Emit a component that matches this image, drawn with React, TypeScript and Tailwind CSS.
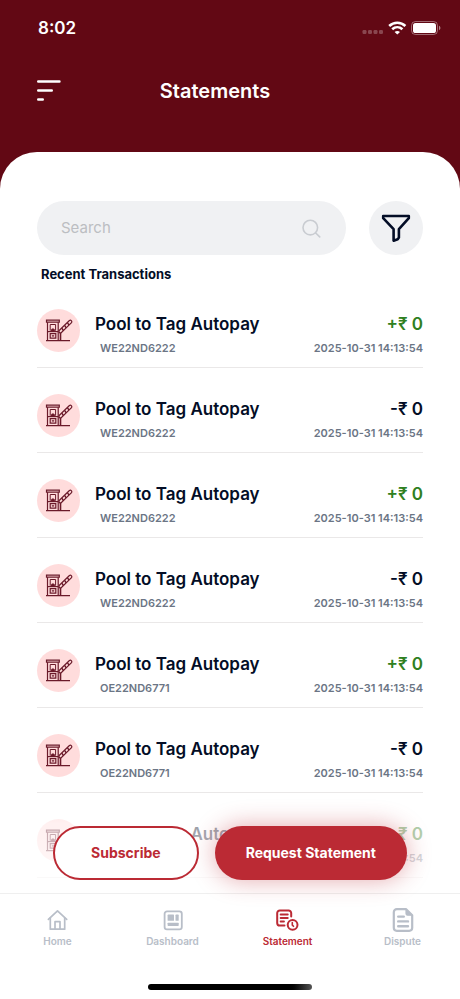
import React from 'react';

interface Transaction {
  id: number;
  title: string;
  vehicle: string;
  type: 'credit' | 'debit';
  amount: number;
  date: string;
}

const transactions: Transaction[] = [
  { id: 1, title: 'Pool to Tag Autopay', vehicle: 'WE22ND6222', type: 'credit', amount: 0, date: '2025-10-31 14:13:54' },
  { id: 2, title: 'Pool to Tag Autopay', vehicle: 'WE22ND6222', type: 'debit', amount: 0, date: '2025-10-31 14:13:54' },
  { id: 3, title: 'Pool to Tag Autopay', vehicle: 'WE22ND6222', type: 'credit', amount: 0, date: '2025-10-31 14:13:54' },
  { id: 4, title: 'Pool to Tag Autopay', vehicle: 'WE22ND6222', type: 'debit', amount: 0, date: '2025-10-31 14:13:54' },
  { id: 5, title: 'Pool to Tag Autopay', vehicle: 'OE22ND6771', type: 'credit', amount: 0, date: '2025-10-31 14:13:54' },
  { id: 6, title: 'Pool to Tag Autopay', vehicle: 'OE22ND6771', type: 'debit', amount: 0, date: '2025-10-31 14:13:54' },
  { id: 7, title: 'Pool to Tag Autopay', vehicle: 'OE22ND6771', type: 'credit', amount: 0, date: '2025-10-31 14:13:54' },
];

const StatusIcons = () => (
  <div className="flex items-center gap-1">
    <svg width="22" height="14" viewBox="0 0 22 14" fill="#fff" fillOpacity="0.25">
      <rect x="0.5" y="9" width="4" height="4" rx="1.2" />
      <rect x="6" y="9" width="4" height="4" rx="1.2" />
      <rect x="11.5" y="9" width="4" height="4" rx="1.2" />
      <rect x="17" y="9" width="4" height="4" rx="1.2" />
    </svg>
    <svg width="19" height="14" viewBox="0 0 19 14" fill="none" stroke="#fff" strokeWidth="2.6">
      <path d="M1.2 5C5.800.6 12.800.6 17.400 5" />
      <path d="M4.200 8.300c3-2.800 7.200-2.800 10.200 0" />
      <path d="M9.300 13.600 6.600 10.900c1.500-1.300 3.900-1.300 5.400 0z" fill="#fff" stroke="none" />
    </svg>
    <svg width="30" height="14" viewBox="0 0 30 14" fill="none">
      <rect x="0.5" y="0.5" width="26" height="13" rx="4" stroke="#fff" strokeOpacity="0.4" />
      <rect x="2" y="2" width="23" height="10" rx="2.6" fill="#fff" />
      <path d="M28 4.8v4.4c.9-.4 1.4-1.2 1.4-2.2S28.9 5.2 28 4.8z" fill="#fff" fillOpacity="0.5" />
    </svg>
  </div>
);

const TollIcon = () => (
  <svg width="29" height="24" viewBox="0 0 29 24" fill="none" stroke="#6b1a2a" strokeWidth="1.2">
    <path d="M2.500 1.200h12.800v2H2.500z" />
    <path d="M3.500 3.200v18.400M14.200 3.200v18.400M2 21.700h24" />
    <path d="M6.200 11.700V5.500h5.400v6.200" strokeWidth="1" />
    <path d="M7 11.900c0-1.500.7-2.200 1.900-2.200s1.900.7 1.900 2.200z" fill="#6b1a2a" strokeWidth="0.6" />
    <path d="M3.700 12.600H14" strokeWidth="1.2" />
    <path d="M6.200 14.700h5.600v4.400H6.200z" />
    <path d="M7.800 16.900h2.400" strokeWidth="1.3" />
    <path d="M16.500 14v7.700" strokeWidth="1.6" />
    <path d="M15.400 11.200 25.400 1.500c1.400-1 3 .6 2.100 2.100L17.200 13.700c-1.600.7-2.800-.9-1.800-2.500z" />
    <path d="m17.800 9.100 1.600 2.400M20.600 6.400l1.600 2.400M23.400 3.700l1.600 2.400" strokeWidth="1.4" />
  </svg>
);

const HomeIcon = () => (
  <svg width="22" height="22" viewBox="0 0 22 22" fill="none" stroke="currentColor" strokeWidth="1.7" strokeLinecap="round" strokeLinejoin="round">
    <path d="M1.4 10.4 10.5 1.8l9.200 8.600" />
    <path d="M3.300 9v11.200h14.400V9" />
    <path d="M8 20v-7.300h5V20" />
  </svg>
);

const DashboardIcon = () => (
  <svg width="22" height="22" viewBox="0 0 22 22" fill="none">
    <rect x="2.6" y="2.4" width="17.2" height="18" rx="2.4" stroke="currentColor" strokeWidth="1.8" />
    <rect x="5.6" y="5.6" width="6.4" height="6.2" rx="0.6" fill="currentColor" />
    <rect x="13.5" y="5.6" width="3.2" height="6.2" rx="0.6" fill="currentColor" />
    <rect x="5.6" y="13.7" width="11.1" height="3.2" rx="0.6" fill="currentColor" />
  </svg>
);

const StatementIcon = () => (
  <svg width="24" height="24" viewBox="0 0 24 24" fill="none" stroke="currentColor" strokeWidth="2" strokeLinecap="round" strokeLinejoin="round">
    <path d="M8.500 17.500H3.800A2.600 2.600 0 0 1 1.200 14.900V5.100A2.600 2.600 0 0 1 3.800 2.500h8.800A2.600 2.600 0 0 1 15.200 5.100v3.500" />
    <path d="M4.600 6.500h7.200M4.600 10h7.200M4.600 13.500h3.400" strokeWidth="1.8" />
    <circle cx="16.600" cy="16.800" r="4.900" />
    <path d="M16.300 14.600v2.500l1.200 1.200" strokeWidth="1.6" />
  </svg>
);

const DisputeIcon = () => (
  <svg width="22" height="26" viewBox="0 0 22 26" fill="none" stroke="currentColor" strokeLinecap="round" strokeLinejoin="round">
    <path d="M4.800 2.200h9.400l6 6v12.600a3 3 0 0 1-3 3H4.800a3 3 0 0 1-3-3V5.200a3 3 0 0 1 3-3z" strokeWidth="2.200" />
    <path d="M14 2.400v4.200c0 1 .6 1.600 1.600 1.600H20z" fill="currentColor" strokeWidth="1.200" />
    <path d="M6.200 9.600h5.600M6.200 14.400h9.800M6.200 19.200h9.800" strokeWidth="2.400" />
  </svg>
);

const TransactionRow: React.FC<{ item: Transaction }> = ({ item }) => {
  const isCredit = item.type === 'credit';

  return (
    <li className="flex h-[85px] items-end border-b border-[#eae8e8] pb-[11px]">
      <div className="mb-1 flex size-[43px] shrink-0 items-center justify-center rounded-full bg-[#ffdcdc]">
        <TollIcon />
      </div>
      <div className="ml-[15px] min-w-0 flex-1">
        <div className="flex items-center justify-between text-[17px] leading-6 font-semibold">
          <p className="text-[#030d26]">{item.title}</p>
          <p className={isCredit ? 'text-[#2f8021]' : 'text-[#030d26]'}>
            {isCredit ? '+' : '-'}₹ {item.amount}
          </p>
        </div>
        <div className="flex items-center justify-between pt-1 text-[11px] leading-4 font-semibold text-[#6b7585]">
          <p className="pl-[5px]">{item.vehicle}</p>
          <p>{item.date}</p>
        </div>
      </div>
    </li>
  );
};

const tabs = [
  { label: 'Home', Icon: HomeIcon },
  { label: 'Dashboard', Icon: DashboardIcon },
  { label: 'Statement', Icon: StatementIcon, active: true },
  { label: 'Dispute', Icon: DisputeIcon },
];

const App = () => {
  return (
    <div className="flex min-h-screen flex-col bg-[#620814] font-['Inter',sans-serif]">
      <header className="h-[152px] text-white">
        <div className="flex h-14 items-center justify-between pr-[19px] pl-[38px]">
          <span className="text-[17px] leading-6 font-semibold">8:02</span>
          <StatusIcons />
        </div>
        <div className="grid grid-cols-[60px_1fr_60px] items-center px-[37px] pt-5">
          <button type="button" aria-label="Open menu" className="flex h-[30px] items-center">
            <svg width="24" height="22" viewBox="0 0 24 22" stroke="#fff" strokeWidth="2.4" strokeLinecap="round">
              <path d="M1.200 1.500h21.300M1.200 10.500h13.600M1.200 19.500h4.600" />
            </svg>
          </button>
          <h1 className="pr-[30px] text-center text-xl leading-[30px] font-semibold">Statements</h1>
        </div>
      </header>

      <main className="relative flex-1 rounded-t-[37px] bg-white px-[37px] pt-[49px] pb-[14px]">
        <div className="flex items-center gap-[23px]">
          <div className="flex h-[54px] min-w-0 flex-1 items-center rounded-[27px] bg-[#f0f1f3] pr-[25px] pl-6">
            <input
              type="search"
              placeholder="Search"
              aria-label="Search"
              className="min-w-0 flex-1 bg-transparent text-[15px] text-[#030d26] outline-none placeholder:text-[#bcbec2]"
            />
            <svg width="20" height="20" viewBox="0 0 20 20" fill="none" stroke="#c9ccd1" strokeWidth="1.6" strokeLinecap="round">
              <circle cx="9.3" cy="9.6" r="7.3" />
              <path d="m14.7 15 4 3.900" />
            </svg>
          </div>
          <button type="button" aria-label="Filter" className="flex size-[54px] shrink-0 items-center justify-center rounded-full bg-[#f0f1f3]">
            <svg width="30" height="28" viewBox="0 0 30 28" fill="none" stroke="#030d26" strokeWidth="2.6" strokeLinejoin="round">
              <path d="M2.200 2h25.600v2.200L17.900 15.200v8.400l-1.200 1.700-4.100 1.400V15.200L2.200 4.200z" />
            </svg>
          </button>
        </div>

        <h2 className="pt-[9px] pl-1 text-[13px] leading-5 font-bold text-[#030d26]">Recent Transactions</h2>

        <ul className="-mt-px">
          {transactions.map((item) => (
            <TransactionRow key={item.id} item={item} />
          ))}
        </ul>

        {/* Actions sit on top of the end of the list */}
        <div className="absolute inset-x-0 bottom-0 flex justify-center gap-4 bg-linear-to-b from-white/0 via-white/60 via-30% to-white/80 pt-8 pb-[13px]">
          <button type="button" className="h-[54px] rounded-full border-2 border-[#bb2a34] bg-white px-9 text-sm font-bold text-[#bb2a34]">
            Subscribe
          </button>
          <button type="button" className="h-[54px] rounded-full bg-[#bb2a34] px-[31px] text-sm font-bold text-white shadow-[0_0_24px_rgba(187,42,52,0.4)]">
            Request Statement
          </button>
        </div>
      </main>

      <nav className="flex flex-col items-center border-t border-[#efefef] bg-white pb-[9px]">
        <div className="grid w-full grid-cols-4">
          {tabs.map(({ label, Icon, active }) => (
            <a
              key={label}
              href="#"
              aria-current={active ? 'page' : undefined}
              className={`flex flex-col items-center pt-3 text-[10px] leading-4 font-semibold ${active ? 'text-[#bb2a34]' : 'text-[#b8bec8]'}`}
            >
              <span className="flex h-[27px] items-center">
                <Icon />
              </span>
              {label}
            </a>
          ))}
        </div>
        <div className="mt-[35px] h-[6px] w-[164px] rounded-full bg-linear-to-r from-black from-85% to-[#555]" />
      </nav>
    </div>
  );
};

export default App;
